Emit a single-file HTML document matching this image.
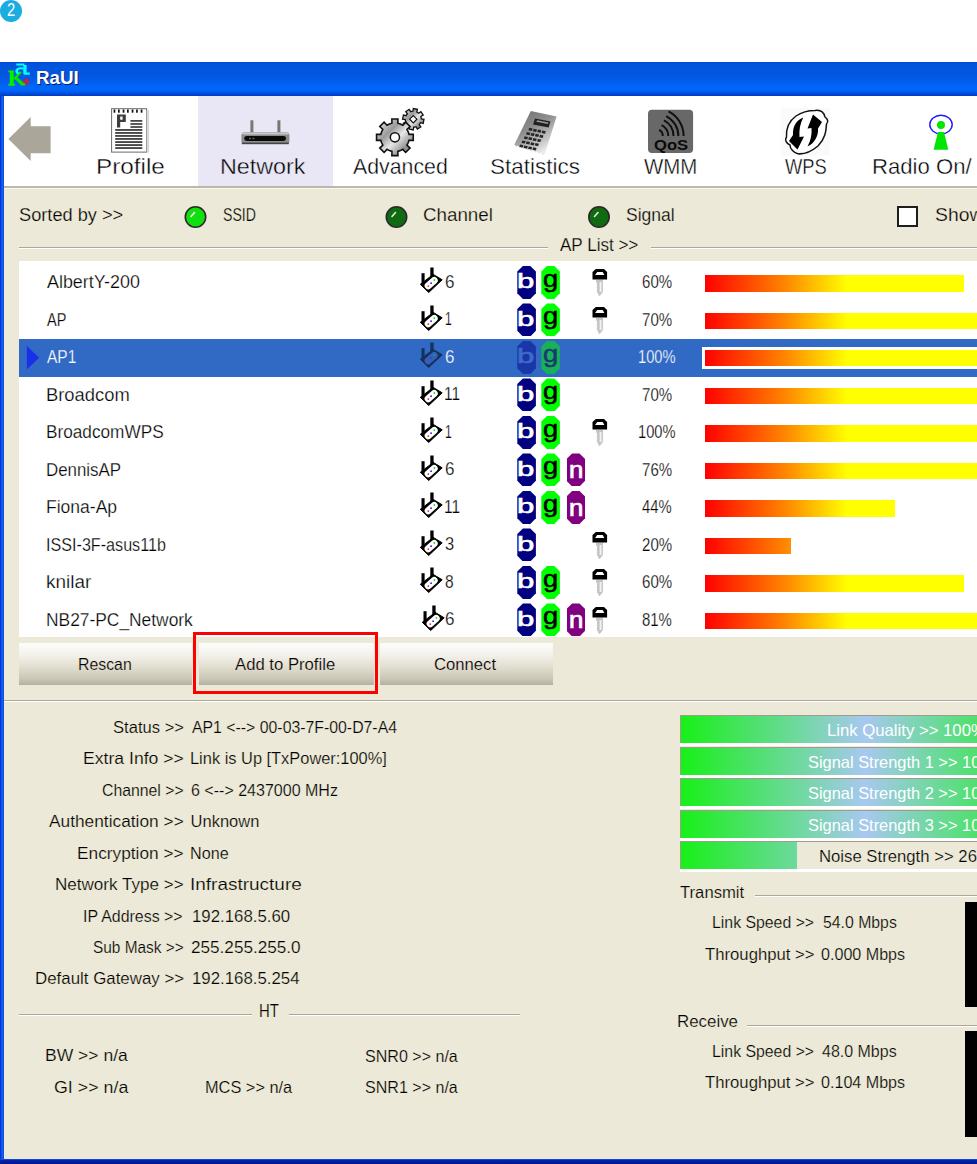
<!DOCTYPE html>
<html><head><meta charset="utf-8"><title>RaUI</title>
<style>
html,body{margin:0;padding:0}
body{width:977px;height:1164px;overflow:hidden;position:relative;background:#fff;font-family:"Liberation Sans",sans-serif}
.a{position:absolute}
.t{position:absolute;white-space:pre;line-height:1;transform-origin:0 0}
svg{position:absolute;overflow:visible}
</style></head><body>
<div class="a" style="left:0px;top:0px;width:22px;height:22px;border-radius:50%;background:#1badE2"></div>
<div class="t" style="left:6.71px;top:1.59px;font-size:17.5px;color:#fff;transform:scaleX(0.8411);">2</div>
<div class="a" style="left:0px;top:62px;width:977px;height:34px;background:linear-gradient(to bottom,#0046dc 0%,#0254dc 6%,#0356e0 38%,#045ce8 55%,#0066fa 72%,#0067fc 82%,#005cf0 88%,#0048d4 94%,#003cc4 100%)"></div>
<div class="a" style="left:0px;top:96px;width:4px;height:1063px;background:linear-gradient(to right,#0428d8 0,#0a3fe0 25%,#1466e8 50%,#0f5ae6 75%,#0050e0 100%)"></div>
<div class="a" style="left:0px;top:1159px;width:977px;height:5px;background:linear-gradient(to bottom,#1a5ae8 0,#0020b0 30%,#00168c 100%)"></div>
<svg style="left:0;top:0" width="40" height="100">
<rect x="9.8" y="70.6" width="3.9" height="15" fill="#00f000"/>
<rect x="8.3" y="70.6" width="5.4" height="1.8" fill="#00f000"/>
<rect x="8.3" y="83.6" width="6.8" height="2" fill="#00f000"/>
<path d="M13,78.6 L19.8,71.2 L22,72.6 L15.2,80 Z" fill="#00e800"/>
<path d="M13.5,77.8 L16.3,76.2 L25.6,84.2 L25,85.6 L21.2,85.6 Z" fill="#00e800"/>
<path d="M16.3,63.6 L24.4,63.6 L24.4,65.6 L16.3,65.6 Z M23.3,65 L26.6,65 L26.6,72.6 L29.8,72.6 L29.8,74.7 L24.6,74.7 Q23.3,74.7 23.3,73.4 Z" fill="#00ffff"/>
<path d="M23.6,67.6 Q18,66.2 15.6,69.6 Q14.6,72.8 17.6,74.4 L19.6,73 Q17.4,72 18,70.4 Q19.4,68.8 23.4,69.6 Z" fill="#00ffff"/>
<path d="M25.2,78.1 h1.7 v2.8 h2.8 v1.7 h-2.8 v3 h-1.7 v-3 h-2.8 v-1.7 h2.8 Z" fill="#ff1010"/>
</svg>
<div class="t" style="left:36.33px;top:68.12px;font-size:19px;color:#fff;font-weight:bold;transform:scaleX(0.9883);text-shadow:1px 1px 0 #0a1a6a;">RaUI</div>
<div class="a" style="left:4px;top:96px;width:973px;height:90px;background:#fff"></div>
<div class="a" style="left:198px;top:96px;width:135px;height:90px;background:#e9e7f5"></div>
<div class="a" style="left:4px;top:186px;width:973px;height:973px;background:#ece9d8"></div>
<div class="a" style="left:4px;top:186px;width:973px;height:2px;background:#bcb9ab"></div>
<div class="a" style="left:4px;top:188px;width:973px;height:1px;background:#f7f6ef"></div>
<svg style="left:0;top:0" width="60" height="170"><polygon points="8.4,139 30.7,117 30.7,126.2 50.6,126.2 50.6,153.2 30.7,153.2 30.7,161" fill="#aaa699"/></svg>
<svg style="left:0;top:0" width="160" height="170"><rect x="111.6" y="108.7" width="35" height="43.4" fill="#fff" stroke="#6a6a6a" stroke-width="1"/><rect x="146.6" y="110" width="2.5" height="42.5" fill="#d8d8d8"/><rect x="113.6" y="109.5" width="1.7" height="3.2" fill="#111"/><rect x="118.0" y="109.5" width="1.7" height="3.2" fill="#111"/><rect x="122.7" y="109.5" width="1.7" height="3.2" fill="#111"/><rect x="127.0" y="109.5" width="1.7" height="3.2" fill="#111"/><rect x="131.7" y="109.5" width="1.7" height="3.2" fill="#111"/><rect x="136.1" y="109.5" width="1.7" height="3.2" fill="#111"/><rect x="140.7" y="109.5" width="1.7" height="3.2" fill="#111"/><path d="M117,114.4 h8.8 v7.6 h-5.6 v5.6 h-3.2 Z M120.2,116.6 v3.1 h2.4 v-3.1 Z" fill="#3e3e3e" fill-rule="evenodd"/><rect x="130.4" y="120.1" width="11.9" height="1.6" fill="#333"/><rect x="130.4" y="123.2" width="11.9" height="1.6" fill="#333"/><rect x="130.4" y="126.2" width="11.9" height="1.6" fill="#333"/><rect x="115.2" y="129.1" width="27.1" height="1.7" fill="#333"/><rect x="115.2" y="132.1" width="27.1" height="1.7" fill="#333"/><rect x="115.2" y="135.1" width="27.1" height="1.7" fill="#333"/><rect x="115.2" y="138.1" width="27.1" height="1.7" fill="#333"/><rect x="115.2" y="141.2" width="27.1" height="1.7" fill="#333"/><rect x="115.2" y="144.2" width="27.1" height="1.7" fill="#333"/><rect x="115.2" y="147.2" width="27.1" height="1.7" fill="#333"/></svg>
<svg style="left:0;top:0" width="300" height="170">
<rect x="250.4" y="120.3" width="3" height="13" fill="#777"/>
<rect x="277.4" y="120.3" width="3" height="13" fill="#777"/>
<rect x="241.4" y="132.3" width="48" height="11.7" rx="3" fill="#8c8c8c"/>
<rect x="242" y="132.6" width="46.8" height="2" rx="1" fill="#c8c8c8"/>
<rect x="244.2" y="136" width="41.8" height="4.9" rx="2.4" fill="#0a0a0a"/>
<rect x="249" y="137.8" width="2" height="1.4" fill="#666"/><rect x="252.5" y="137.8" width="2" height="1.4" fill="#666"/>
<rect x="241.8" y="142.6" width="47" height="1.6" fill="#444"/>
</svg>
<svg style="left:0;top:0" width="440" height="170">
<defs><linearGradient id="gm" x1="0" y1="0" x2="1" y2="1">
<stop offset="0" stop-color="#f4f4f4"/><stop offset="0.35" stop-color="#9a9a9a"/><stop offset="0.55" stop-color="#e8e8e8"/><stop offset="0.8" stop-color="#8a8a8a"/><stop offset="1" stop-color="#d0d0d0"/></linearGradient></defs>
<path d="M421.15,117.67 L421.29,118.84 L424.00,119.24 L423.17,123.33 L420.52,122.65 L419.94,123.67 L419.21,124.59 L420.84,126.79 L417.36,129.10 L415.97,126.74 L414.83,127.05 L413.66,127.19 L413.26,129.90 L409.17,129.07 L409.85,126.42 L408.83,125.84 L407.91,125.11 L405.71,126.74 L403.40,123.26 L405.76,121.87 L405.45,120.73 L405.31,119.56 L402.60,119.16 L403.43,115.07 L406.08,115.75 L406.66,114.73 L407.39,113.81 L405.76,111.61 L409.24,109.30 L410.63,111.66 L411.77,111.35 L412.94,111.21 L413.34,108.50 L417.43,109.33 L416.75,111.98 L417.77,112.56 L418.69,113.29 L420.89,111.66 L423.20,115.14 L420.84,116.53Z" fill="url(#gm)" stroke="#111" stroke-width="1.3"/>
<path d="M413.3,115.6 L416.9,119.2 L413.3,122.8 L409.7,119.2 Z" fill="#fff" stroke="#111" stroke-width="1.2"/>
<path d="M408.20,131.79 L409.00,134.35 L413.25,134.25 L413.25,140.35 L409.00,140.25 L408.20,142.81 L406.95,145.18 L410.03,148.11 L405.71,152.43 L402.78,149.35 L400.41,150.60 L397.85,151.40 L397.95,155.65 L391.85,155.65 L391.95,151.40 L389.39,150.60 L387.02,149.35 L384.09,152.43 L379.77,148.11 L382.85,145.18 L381.60,142.81 L380.80,140.25 L376.55,140.35 L376.55,134.25 L380.80,134.35 L381.60,131.79 L382.85,129.42 L379.77,126.49 L384.09,122.17 L387.02,125.25 L389.39,124.00 L391.95,123.20 L391.85,118.95 L397.95,118.95 L397.85,123.20 L400.41,124.00 L402.78,125.25 L405.71,122.17 L410.03,126.49 L406.95,129.42Z" fill="url(#gm)" stroke="#111" stroke-width="1.6"/>
<circle cx="394.9" cy="137.3" r="4.6" fill="#fff" stroke="#111" stroke-width="1.5"/>
</svg>
<svg style="left:0;top:0" width="580" height="170"><defs><linearGradient id="cg" x1="0" y1="0" x2="0.6" y2="1"><stop offset="0" stop-color="#6e6e6e"/><stop offset="0.45" stop-color="#8c8c8c"/><stop offset="0.8" stop-color="#c4c4c4"/><stop offset="1" stop-color="#ececec"/></linearGradient></defs><polygon points="530.8,111.1 556.6,116.4 544.9,154.1 514.2,144.9" fill="url(#cg)"/><polygon points="535,118.6 550.5,121.6 548.6,127.6 533,124.6" fill="#222"/><polygon points="537,120.2 548.5,122.4 548,124 536.4,121.8" fill="#9a9a9a"/><polygon points="529.20,127.80 532.60,128.50 531.80,131.00 528.40,130.30" fill="#262626"/><polygon points="533.60,128.70 537.00,129.40 536.20,131.90 532.80,131.20" fill="#262626"/><polygon points="538.00,129.60 541.40,130.30 540.60,132.80 537.20,132.10" fill="#262626"/><polygon points="542.40,130.50 545.80,131.20 545.00,133.70 541.60,133.00" fill="#262626"/><polygon points="526.90,132.00 530.30,132.70 529.50,135.20 526.10,134.50" fill="#262626"/><polygon points="531.30,132.90 534.70,133.60 533.90,136.10 530.50,135.40" fill="#262626"/><polygon points="535.70,133.80 539.10,134.50 538.30,137.00 534.90,136.30" fill="#262626"/><polygon points="540.10,134.70 543.50,135.40 542.70,137.90 539.30,137.20" fill="#262626"/><polygon points="524.60,136.20 528.00,136.90 527.20,139.40 523.80,138.70" fill="#262626"/><polygon points="529.00,137.10 532.40,137.80 531.60,140.30 528.20,139.60" fill="#262626"/><polygon points="533.40,138.00 536.80,138.70 536.00,141.20 532.60,140.50" fill="#262626"/><polygon points="537.80,138.90 541.20,139.60 540.40,142.10 537.00,141.40" fill="#262626"/><polygon points="522.30,140.40 525.70,141.10 524.90,143.60 521.50,142.90" fill="#262626"/><polygon points="526.70,141.30 530.10,142.00 529.30,144.50 525.90,143.80" fill="#262626"/><polygon points="531.10,142.20 534.50,142.90 533.70,145.40 530.30,144.70" fill="#262626"/><polygon points="535.50,143.10 538.90,143.80 538.10,146.30 534.70,145.60" fill="#262626"/><polygon points="520.00,144.60 523.40,145.30 522.60,147.80 519.20,147.10" fill="#262626"/><polygon points="524.40,145.50 527.80,146.20 527.00,148.70 523.60,148.00" fill="#262626"/><polygon points="528.80,146.40 532.20,147.10 531.40,149.60 528.00,148.90" fill="#262626"/><polygon points="533.20,147.30 536.60,148.00 535.80,150.50 532.40,149.80" fill="#262626"/><path d="M515,146 L545,154.5" stroke="#d8d8d8" stroke-width="1" stroke-dasharray="2,2"/></svg>
<svg style="left:0;top:0" width="720" height="170"><defs><clipPath id="qc"><rect x="648" y="109.8" width="45.1" height="43.3" rx="4"/></clipPath></defs><rect x="648" y="109.8" width="45.1" height="43.3" rx="4" fill="#686868"/><g clip-path="url(#qc)"><path d="M659.09,129.94 A6.8,6.8 0 0 1 662.80,136.00" fill="none" stroke="#111" stroke-width="2"/><path d="M661.58,125.04 A12.3,12.3 0 0 1 668.30,136.00" fill="none" stroke="#111" stroke-width="2"/><path d="M663.94,120.41 A17.5,17.5 0 0 1 673.50,136.00" fill="none" stroke="#111" stroke-width="2"/><path d="M666.17,116.04 A22.4,22.4 0 0 1 678.40,136.00" fill="none" stroke="#111" stroke-width="2"/><path d="M668.53,111.41 A27.6,27.6 0 0 1 683.60,136.00" fill="none" stroke="#111" stroke-width="2"/></g></svg>
<div class="t" style="left:653.58px;top:137.53px;font-size:14.5px;color:#0a0a0a;font-weight:bold;transform:scaleX(1.1459);">QoS</div>
<svg style="left:0;top:0" width="840" height="170">
<rect x="781" y="108" width="48.7" height="47.6" fill="#fafafa"/>
<path d="M815,110.5 C822,109.5 824,113 825,117 C828,119 828.5,122 826.5,124 C826,130 826,138 818,146 C812,151 806,154.5 798,153.8 C794,153 790,149 790,145 C786,143 784.5,140 786.5,137 C786,128 789,121 796,116 C802,112 809,110.5 815,110.5 Z" fill="#fff" stroke="#111" stroke-width="1.5"/>
<path d="M803.3,117.5 C796,120 792.5,127 793,135 L789,141 L797.5,149.5 L804,136.5 L799.5,137 C799,130 800,124 803.3,117.5 Z" fill="#000"/>
<path d="M807.5,146.5 C815,143 818.5,135.5 818,128.5 L822,122 L813,114.5 L807.5,128.5 L811.5,128 C812,134 811,140 807.5,146.5 Z" fill="#000"/>
</svg>
<svg style="left:0;top:0" width="977" height="170">
<ellipse cx="941" cy="124.6" rx="11.2" ry="9.3" fill="none" stroke="#1a1aff" stroke-width="1.4"/>
<circle cx="941" cy="125" r="4" fill="#00e600"/>
<polygon points="938,132 944,132 948.3,149.8 933.6,149.8" fill="#00e600"/>
</svg>
<div class="t" style="left:96.10px;top:155.68px;font-size:22px;color:#000;transform:scaleX(1.1046);-webkit-text-stroke:0.38px #fff;">Profile</div>
<div class="t" style="left:220.18px;top:155.68px;font-size:22px;color:#000;transform:scaleX(1.0591);-webkit-text-stroke:0.38px #e9e7f5;">Network</div>
<div class="t" style="left:352.80px;top:155.68px;font-size:22px;color:#000;transform:scaleX(0.9688);-webkit-text-stroke:0.38px #fff;">Advanced</div>
<div class="t" style="left:490.30px;top:155.68px;font-size:22px;color:#000;transform:scaleX(1.0214);-webkit-text-stroke:0.38px #fff;">Statistics</div>
<div class="t" style="left:644.00px;top:155.68px;font-size:22px;color:#000;transform:scaleX(0.9297);-webkit-text-stroke:0.38px #fff;">WMM</div>
<div class="t" style="left:785.00px;top:155.68px;font-size:22px;color:#000;transform:scaleX(0.8335);-webkit-text-stroke:0.38px #fff;">WPS</div>
<div class="t" style="left:872.27px;top:155.68px;font-size:22px;color:#000;transform:scaleX(1.0061);-webkit-text-stroke:0.38px #fff;">Radio On/</div>
<div class="t" style="left:19.43px;top:205.76px;font-size:18px;color:#000;transform:scaleX(1.0114);-webkit-text-stroke:0.25px #ece9d8;">Sorted by &gt;&gt;</div>
<svg style="left:0;top:0" width="977" height="240"><circle cx="195.5" cy="217" r="10.2" fill="#10e010" stroke="#2a2a2a" stroke-width="1.6"/><path d="M191.0,216.5 L194.5,212.5" stroke="#f0fff0" stroke-width="1.6" stroke-linecap="round"/></svg>
<div class="t" style="left:222.56px;top:205.76px;font-size:18px;color:#000;transform:scaleX(0.7838);-webkit-text-stroke:0.25px #ece9d8;">SSID</div>
<svg style="left:0;top:0" width="977" height="240"><circle cx="396.5" cy="217" r="10.2" fill="#0f6a12" stroke="#2a2a2a" stroke-width="1.6"/><path d="M392.0,216.5 L395.5,212.5" stroke="#d8f0d8" stroke-width="1.6" stroke-linecap="round"/></svg>
<div class="t" style="left:422.82px;top:205.76px;font-size:18px;color:#000;transform:scaleX(1.0427);-webkit-text-stroke:0.25px #ece9d8;">Channel</div>
<svg style="left:0;top:0" width="977" height="240"><circle cx="599" cy="217" r="10.2" fill="#0f6a12" stroke="#2a2a2a" stroke-width="1.6"/><path d="M594.5,216.5 L598,212.5" stroke="#d8f0d8" stroke-width="1.6" stroke-linecap="round"/></svg>
<div class="t" style="left:626.45px;top:205.76px;font-size:18px;color:#000;transform:scaleX(0.9733);-webkit-text-stroke:0.25px #ece9d8;">Signal</div>
<div class="a" style="left:896.8px;top:205.6px;width:17px;height:17px;border:2px solid #1e1e1e;background:#fff"></div>
<div class="t" style="left:935.40px;top:205.76px;font-size:18px;color:#000;transform:scaleX(1.0742);-webkit-text-stroke:0.25px #ece9d8;">Show</div>
<div class="a" style="left:19px;top:247px;width:529px;height:1px;background:#aca899"></div>
<div class="a" style="left:19px;top:248px;width:529px;height:1px;background:#fff"></div>
<div class="a" style="left:651px;top:247px;width:326px;height:1px;background:#aca899"></div>
<div class="a" style="left:651px;top:248px;width:326px;height:1px;background:#fff"></div>
<div class="t" style="left:560.00px;top:235.76px;font-size:18px;color:#000;transform:scaleX(0.9468);-webkit-text-stroke:0.25px #ece9d8;">AP List &gt;&gt;</div>
<div class="a" style="left:19px;top:261px;width:958px;height:376px;background:#fff"></div>
<div class="t" style="left:47.40px;top:273.36px;font-size:18px;color:#000;transform:scaleX(0.9940);-webkit-text-stroke:0.25px #fff;">AlbertY-200</div>
<svg style="left:420px;top:264.3px" width="24" height="30" viewBox="0 0 24 30"><rect x="1.5" y="9.2" width="3.1" height="11.5" fill="#000"/><rect x="10.3" y="3.5" width="3.3" height="8.8" fill="#000"/><polygon points="0.3,20.3 13.2,10.4 22.2,15.8 8.7,28.5" fill="#000" stroke="#000" stroke-width="1" stroke-linejoin="round"/><rect x="3.7" y="15.6" width="15" height="7" rx="3.3" fill="#fff" transform="rotate(-42 11.2 19.1)"/><circle cx="8.3" cy="22.1" r="0.9" fill="#ff2020" opacity="1"/><circle cx="11.1" cy="19.2" r="0.9" fill="#2020ff" opacity="1"/><circle cx="14.4" cy="16" r="0.9" fill="#20e020" opacity="1"/></svg>
<div class="t" style="left:444.50px;top:272.86px;font-size:18px;color:#000;transform:scaleX(0.9481);-webkit-text-stroke:0.25px #fff;">6</div>
<div class="a" style="left:517.3px;top:265.90000000000003px;width:18.6px;height:33px;background:#000080;clip-path:polygon(5.6px 0,13px 0,18.6px 5.6px,18.6px 27.4px,13px 33px,5.6px 33px,0 27.4px,0 5.6px)"></div>
<div class="t" style="left:517.41px;top:271.22px;font-size:23px;color:#fff;transform:scale(1.3529,0.9043);-webkit-text-stroke:0.7px #fff;">b</div>
<div class="a" style="left:541.3px;top:265.90000000000003px;width:18.6px;height:33px;background:#00ff00;clip-path:polygon(5.6px 0,13px 0,18.6px 5.6px,18.6px 27.4px,13px 33px,5.6px 33px,0 27.4px,0 5.6px)"></div>
<div class="t" style="left:542.70px;top:266.95px;font-size:23px;color:#000;transform:scale(1.1872,1.0449);-webkit-text-stroke:0.5px #000;">g</div>
<svg style="left:592.2px;top:269.0px" width="18" height="30" viewBox="0 0 18 30"><path d="M4.1,10.8 L10.9,10.8 L10.9,23 L7.8,26.9 L6.2,26 L6.2,24.2 L4.8,23.6 L5.4,22 L4.6,21.2 L5.4,19.4 L4.6,18.6 L5.4,17 L4.6,16 L5.4,14.6 L4.1,13.6 Z" fill="#c4c4c4"/><rect x="7.6" y="13" width="1.9" height="10" fill="#f2f2f2"/><polygon points="3.8,0.1 12,0.1 15.1,3 15.1,10.6 0.5,10.6 0.5,3" fill="#000"/><polygon points="5.2,3 10.7,3 12.4,6 3.1,6" fill="#fff"/></svg>
<div class="t" style="left:641.59px;top:273.16px;font-size:18px;color:#000;transform:scaleX(0.8370);-webkit-text-stroke:0.25px #fff;">60%</div>
<div class="a" style="left:705.1px;top:275.1px;width:258.59999999999997px;height:16.6px;background:linear-gradient(to right,#ff0000 0,#ff8000 77px,#ffff00 142px,#ffff00 100%)"></div>
<div class="t" style="left:47.40px;top:310.86px;font-size:18px;color:#000;transform:scaleX(0.8041);-webkit-text-stroke:0.25px #fff;">AP</div>
<svg style="left:420px;top:301.8px" width="24" height="30" viewBox="0 0 24 30"><rect x="1.5" y="9.2" width="3.1" height="11.5" fill="#000"/><rect x="10.3" y="3.5" width="3.3" height="8.8" fill="#000"/><polygon points="0.3,20.3 13.2,10.4 22.2,15.8 8.7,28.5" fill="#000" stroke="#000" stroke-width="1" stroke-linejoin="round"/><rect x="3.7" y="15.6" width="15" height="7" rx="3.3" fill="#fff" transform="rotate(-42 11.2 19.1)"/><circle cx="8.3" cy="22.1" r="0.9" fill="#ff2020" opacity="1"/><circle cx="11.1" cy="19.2" r="0.9" fill="#2020ff" opacity="1"/><circle cx="14.4" cy="16" r="0.9" fill="#20e020" opacity="1"/></svg>
<div class="t" style="left:444.54px;top:310.36px;font-size:18px;color:#000;transform:scaleX(0.6743);-webkit-text-stroke:0.25px #fff;">1</div>
<div class="a" style="left:517.3px;top:303.40000000000003px;width:18.6px;height:33px;background:#000080;clip-path:polygon(5.6px 0,13px 0,18.6px 5.6px,18.6px 27.4px,13px 33px,5.6px 33px,0 27.4px,0 5.6px)"></div>
<div class="t" style="left:517.41px;top:308.72px;font-size:23px;color:#fff;transform:scale(1.3529,0.9043);-webkit-text-stroke:0.7px #fff;">b</div>
<div class="a" style="left:541.3px;top:303.40000000000003px;width:18.6px;height:33px;background:#00ff00;clip-path:polygon(5.6px 0,13px 0,18.6px 5.6px,18.6px 27.4px,13px 33px,5.6px 33px,0 27.4px,0 5.6px)"></div>
<div class="t" style="left:542.70px;top:304.45px;font-size:23px;color:#000;transform:scale(1.1872,1.0449);-webkit-text-stroke:0.5px #000;">g</div>
<svg style="left:592.2px;top:306.5px" width="18" height="30" viewBox="0 0 18 30"><path d="M4.1,10.8 L10.9,10.8 L10.9,23 L7.8,26.9 L6.2,26 L6.2,24.2 L4.8,23.6 L5.4,22 L4.6,21.2 L5.4,19.4 L4.6,18.6 L5.4,17 L4.6,16 L5.4,14.6 L4.1,13.6 Z" fill="#c4c4c4"/><rect x="7.6" y="13" width="1.9" height="10" fill="#f2f2f2"/><polygon points="3.8,0.1 12,0.1 15.1,3 15.1,10.6 0.5,10.6 0.5,3" fill="#000"/><polygon points="5.2,3 10.7,3 12.4,6 3.1,6" fill="#fff"/></svg>
<div class="t" style="left:641.59px;top:310.66px;font-size:18px;color:#000;transform:scaleX(0.8370);-webkit-text-stroke:0.25px #fff;">70%</div>
<div class="a" style="left:705.1px;top:312.6px;width:301.7px;height:16.6px;background:linear-gradient(to right,#ff0000 0,#ff8000 77px,#ffff00 142px,#ffff00 100%)"></div>
<div class="a" style="left:19px;top:339.3px;width:958px;height:37.5px;background:#316ac5"></div>
<svg style="left:0;top:0" width="60" height="400"><polygon points="26.8,346.0 39.2,357.8 26.8,369.6" fill="#1a30e8"/></svg>
<div class="t" style="left:47.40px;top:348.36px;font-size:18px;color:#fff;transform:scaleX(0.8590);-webkit-text-stroke:0.25px #316ac5;">AP1</div>
<svg style="left:420px;top:339.3px" width="24" height="30" viewBox="0 0 24 30"><rect x="1.5" y="9.2" width="3.1" height="11.5" fill="#17305f"/><rect x="10.3" y="3.5" width="3.3" height="8.8" fill="#17305f"/><polygon points="0.3,20.3 13.2,10.4 22.2,15.8 8.7,28.5" fill="#17305f" stroke="#17305f" stroke-width="1" stroke-linejoin="round"/><rect x="3.7" y="15.6" width="15" height="7" rx="3.3" fill="#2f62b8" transform="rotate(-42 11.2 19.1)"/><circle cx="8.3" cy="22.1" r="0.9" fill="#ff2020" opacity="0.55"/><circle cx="11.1" cy="19.2" r="0.9" fill="#2020ff" opacity="0.55"/><circle cx="14.4" cy="16" r="0.9" fill="#20e020" opacity="0.55"/></svg>
<div class="t" style="left:444.50px;top:347.86px;font-size:18px;color:#fff;transform:scaleX(0.9481);-webkit-text-stroke:0.25px #316ac5;">6</div>
<div class="a" style="left:517.3px;top:340.90000000000003px;width:18.6px;height:33px;background:#1a36a8;clip-path:polygon(5.6px 0,13px 0,18.6px 5.6px,18.6px 27.4px,13px 33px,5.6px 33px,0 27.4px,0 5.6px)"></div>
<div class="t" style="left:517.41px;top:346.22px;font-size:23px;color:#3c6cc8;transform:scale(1.3529,0.9043);-webkit-text-stroke:0.7px #3c6cc8;">b</div>
<div class="a" style="left:541.3px;top:340.90000000000003px;width:18.6px;height:33px;background:#18b058;clip-path:polygon(5.6px 0,13px 0,18.6px 5.6px,18.6px 27.4px,13px 33px,5.6px 33px,0 27.4px,0 5.6px)"></div>
<div class="t" style="left:542.70px;top:341.95px;font-size:23px;color:#183a70;transform:scale(1.1872,1.0449);-webkit-text-stroke:0.5px #183a70;">g</div>
<div class="t" style="left:637.78px;top:348.16px;font-size:18px;color:#fff;transform:scaleX(0.8158);-webkit-text-stroke:0.25px #316ac5;">100%</div>
<div class="a" style="left:702px;top:346.8px;width:300px;height:22px;background:#fff"></div>
<div class="a" style="left:705.3px;top:350.1px;width:300px;height:15.7px;background:linear-gradient(to right,#ff0000 0,#ff8000 77px,#ffff00 142px,#ffff00 100%)"></div>
<div class="t" style="left:45.97px;top:385.86px;font-size:18px;color:#000;transform:scaleX(1.0201);-webkit-text-stroke:0.25px #fff;">Broadcom</div>
<svg style="left:420px;top:376.8px" width="24" height="30" viewBox="0 0 24 30"><rect x="1.5" y="9.2" width="3.1" height="11.5" fill="#000"/><rect x="10.3" y="3.5" width="3.3" height="8.8" fill="#000"/><polygon points="0.3,20.3 13.2,10.4 22.2,15.8 8.7,28.5" fill="#000" stroke="#000" stroke-width="1" stroke-linejoin="round"/><rect x="3.7" y="15.6" width="15" height="7" rx="3.3" fill="#fff" transform="rotate(-42 11.2 19.1)"/><circle cx="8.3" cy="22.1" r="0.9" fill="#ff2020" opacity="1"/><circle cx="11.1" cy="19.2" r="0.9" fill="#2020ff" opacity="1"/><circle cx="14.4" cy="16" r="0.9" fill="#20e020" opacity="1"/></svg>
<div class="t" style="left:444.33px;top:385.36px;font-size:18px;color:#000;transform:scaleX(0.8615);-webkit-text-stroke:0.25px #fff;">11</div>
<div class="a" style="left:517.3px;top:378.40000000000003px;width:18.6px;height:33px;background:#000080;clip-path:polygon(5.6px 0,13px 0,18.6px 5.6px,18.6px 27.4px,13px 33px,5.6px 33px,0 27.4px,0 5.6px)"></div>
<div class="t" style="left:517.41px;top:383.72px;font-size:23px;color:#fff;transform:scale(1.3529,0.9043);-webkit-text-stroke:0.7px #fff;">b</div>
<div class="a" style="left:541.3px;top:378.40000000000003px;width:18.6px;height:33px;background:#00ff00;clip-path:polygon(5.6px 0,13px 0,18.6px 5.6px,18.6px 27.4px,13px 33px,5.6px 33px,0 27.4px,0 5.6px)"></div>
<div class="t" style="left:542.70px;top:379.45px;font-size:23px;color:#000;transform:scale(1.1872,1.0449);-webkit-text-stroke:0.5px #000;">g</div>
<div class="t" style="left:641.59px;top:385.66px;font-size:18px;color:#000;transform:scaleX(0.8370);-webkit-text-stroke:0.25px #fff;">70%</div>
<div class="a" style="left:705.1px;top:387.6px;width:301.7px;height:16.6px;background:linear-gradient(to right,#ff0000 0,#ff8000 77px,#ffff00 142px,#ffff00 100%)"></div>
<div class="t" style="left:46.06px;top:423.36px;font-size:18px;color:#000;transform:scaleX(0.9564);-webkit-text-stroke:0.25px #fff;">BroadcomWPS</div>
<svg style="left:420px;top:414.3px" width="24" height="30" viewBox="0 0 24 30"><rect x="1.5" y="9.2" width="3.1" height="11.5" fill="#000"/><rect x="10.3" y="3.5" width="3.3" height="8.8" fill="#000"/><polygon points="0.3,20.3 13.2,10.4 22.2,15.8 8.7,28.5" fill="#000" stroke="#000" stroke-width="1" stroke-linejoin="round"/><rect x="3.7" y="15.6" width="15" height="7" rx="3.3" fill="#fff" transform="rotate(-42 11.2 19.1)"/><circle cx="8.3" cy="22.1" r="0.9" fill="#ff2020" opacity="1"/><circle cx="11.1" cy="19.2" r="0.9" fill="#2020ff" opacity="1"/><circle cx="14.4" cy="16" r="0.9" fill="#20e020" opacity="1"/></svg>
<div class="t" style="left:444.54px;top:422.86px;font-size:18px;color:#000;transform:scaleX(0.6743);-webkit-text-stroke:0.25px #fff;">1</div>
<div class="a" style="left:517.3px;top:415.90000000000003px;width:18.6px;height:33px;background:#000080;clip-path:polygon(5.6px 0,13px 0,18.6px 5.6px,18.6px 27.4px,13px 33px,5.6px 33px,0 27.4px,0 5.6px)"></div>
<div class="t" style="left:517.41px;top:421.22px;font-size:23px;color:#fff;transform:scale(1.3529,0.9043);-webkit-text-stroke:0.7px #fff;">b</div>
<div class="a" style="left:541.3px;top:415.90000000000003px;width:18.6px;height:33px;background:#00ff00;clip-path:polygon(5.6px 0,13px 0,18.6px 5.6px,18.6px 27.4px,13px 33px,5.6px 33px,0 27.4px,0 5.6px)"></div>
<div class="t" style="left:542.70px;top:416.95px;font-size:23px;color:#000;transform:scale(1.1872,1.0449);-webkit-text-stroke:0.5px #000;">g</div>
<svg style="left:592.2px;top:419.0px" width="18" height="30" viewBox="0 0 18 30"><path d="M4.1,10.8 L10.9,10.8 L10.9,23 L7.8,26.9 L6.2,26 L6.2,24.2 L4.8,23.6 L5.4,22 L4.6,21.2 L5.4,19.4 L4.6,18.6 L5.4,17 L4.6,16 L5.4,14.6 L4.1,13.6 Z" fill="#c4c4c4"/><rect x="7.6" y="13" width="1.9" height="10" fill="#f2f2f2"/><polygon points="3.8,0.1 12,0.1 15.1,3 15.1,10.6 0.5,10.6 0.5,3" fill="#000"/><polygon points="5.2,3 10.7,3 12.4,6 3.1,6" fill="#fff"/></svg>
<div class="t" style="left:637.78px;top:423.16px;font-size:18px;color:#000;transform:scaleX(0.8158);-webkit-text-stroke:0.25px #fff;">100%</div>
<div class="a" style="left:705.1px;top:425.1px;width:430.99999999999994px;height:16.6px;background:linear-gradient(to right,#ff0000 0,#ff8000 77px,#ffff00 142px,#ffff00 100%)"></div>
<div class="t" style="left:46.08px;top:460.86px;font-size:18px;color:#000;transform:scaleX(0.9373);-webkit-text-stroke:0.25px #fff;">DennisAP</div>
<svg style="left:420px;top:451.8px" width="24" height="30" viewBox="0 0 24 30"><rect x="1.5" y="9.2" width="3.1" height="11.5" fill="#000"/><rect x="10.3" y="3.5" width="3.3" height="8.8" fill="#000"/><polygon points="0.3,20.3 13.2,10.4 22.2,15.8 8.7,28.5" fill="#000" stroke="#000" stroke-width="1" stroke-linejoin="round"/><rect x="3.7" y="15.6" width="15" height="7" rx="3.3" fill="#fff" transform="rotate(-42 11.2 19.1)"/><circle cx="8.3" cy="22.1" r="0.9" fill="#ff2020" opacity="1"/><circle cx="11.1" cy="19.2" r="0.9" fill="#2020ff" opacity="1"/><circle cx="14.4" cy="16" r="0.9" fill="#20e020" opacity="1"/></svg>
<div class="t" style="left:444.50px;top:460.36px;font-size:18px;color:#000;transform:scaleX(0.9481);-webkit-text-stroke:0.25px #fff;">6</div>
<div class="a" style="left:517.3px;top:453.40000000000003px;width:18.6px;height:33px;background:#000080;clip-path:polygon(5.6px 0,13px 0,18.6px 5.6px,18.6px 27.4px,13px 33px,5.6px 33px,0 27.4px,0 5.6px)"></div>
<div class="t" style="left:517.41px;top:458.72px;font-size:23px;color:#fff;transform:scale(1.3529,0.9043);-webkit-text-stroke:0.7px #fff;">b</div>
<div class="a" style="left:541.3px;top:453.40000000000003px;width:18.6px;height:33px;background:#00ff00;clip-path:polygon(5.6px 0,13px 0,18.6px 5.6px,18.6px 27.4px,13px 33px,5.6px 33px,0 27.4px,0 5.6px)"></div>
<div class="t" style="left:542.70px;top:454.45px;font-size:23px;color:#000;transform:scale(1.1872,1.0449);-webkit-text-stroke:0.5px #000;">g</div>
<div class="a" style="left:566.5px;top:453.40000000000003px;width:18.6px;height:33px;background:#800080;clip-path:polygon(5.6px 0,13px 0,18.6px 5.6px,18.6px 27.4px,13px 33px,5.6px 33px,0 27.4px,0 5.6px)"></div>
<div class="t" style="left:568.64px;top:459.38px;font-size:23px;color:#fff;transform:scale(1.1230,1.0256);-webkit-text-stroke:0.7px #fff;">n</div>
<div class="t" style="left:641.59px;top:460.66px;font-size:18px;color:#000;transform:scaleX(0.8370);-webkit-text-stroke:0.25px #fff;">76%</div>
<div class="a" style="left:705.1px;top:462.6px;width:327.55999999999995px;height:16.6px;background:linear-gradient(to right,#ff0000 0,#ff8000 77px,#ffff00 142px,#ffff00 100%)"></div>
<div class="t" style="left:46.03px;top:498.36px;font-size:18px;color:#000;transform:scaleX(0.9732);-webkit-text-stroke:0.25px #fff;">Fiona-Ap</div>
<svg style="left:420px;top:489.3px" width="24" height="30" viewBox="0 0 24 30"><rect x="1.5" y="9.2" width="3.1" height="11.5" fill="#000"/><rect x="10.3" y="3.5" width="3.3" height="8.8" fill="#000"/><polygon points="0.3,20.3 13.2,10.4 22.2,15.8 8.7,28.5" fill="#000" stroke="#000" stroke-width="1" stroke-linejoin="round"/><rect x="3.7" y="15.6" width="15" height="7" rx="3.3" fill="#fff" transform="rotate(-42 11.2 19.1)"/><circle cx="8.3" cy="22.1" r="0.9" fill="#ff2020" opacity="1"/><circle cx="11.1" cy="19.2" r="0.9" fill="#2020ff" opacity="1"/><circle cx="14.4" cy="16" r="0.9" fill="#20e020" opacity="1"/></svg>
<div class="t" style="left:444.33px;top:497.86px;font-size:18px;color:#000;transform:scaleX(0.8615);-webkit-text-stroke:0.25px #fff;">11</div>
<div class="a" style="left:517.3px;top:490.90000000000003px;width:18.6px;height:33px;background:#000080;clip-path:polygon(5.6px 0,13px 0,18.6px 5.6px,18.6px 27.4px,13px 33px,5.6px 33px,0 27.4px,0 5.6px)"></div>
<div class="t" style="left:517.41px;top:496.22px;font-size:23px;color:#fff;transform:scale(1.3529,0.9043);-webkit-text-stroke:0.7px #fff;">b</div>
<div class="a" style="left:541.3px;top:490.90000000000003px;width:18.6px;height:33px;background:#00ff00;clip-path:polygon(5.6px 0,13px 0,18.6px 5.6px,18.6px 27.4px,13px 33px,5.6px 33px,0 27.4px,0 5.6px)"></div>
<div class="t" style="left:542.70px;top:491.95px;font-size:23px;color:#000;transform:scale(1.1872,1.0449);-webkit-text-stroke:0.5px #000;">g</div>
<div class="a" style="left:566.5px;top:490.90000000000003px;width:18.6px;height:33px;background:#800080;clip-path:polygon(5.6px 0,13px 0,18.6px 5.6px,18.6px 27.4px,13px 33px,5.6px 33px,0 27.4px,0 5.6px)"></div>
<div class="t" style="left:568.64px;top:496.88px;font-size:23px;color:#fff;transform:scale(1.1230,1.0256);-webkit-text-stroke:0.7px #fff;">n</div>
<div class="t" style="left:642.07px;top:498.16px;font-size:18px;color:#000;transform:scaleX(0.8237);-webkit-text-stroke:0.25px #fff;">44%</div>
<div class="a" style="left:705.1px;top:500.1px;width:189.64px;height:16.6px;background:linear-gradient(to right,#ff0000 0,#ff8000 77px,#ffff00 142px,#ffff00 100%)"></div>
<div class="t" style="left:46.14px;top:535.86px;font-size:18px;color:#000;transform:scaleX(0.8967);-webkit-text-stroke:0.25px #fff;">ISSI-3F-asus11b</div>
<svg style="left:420px;top:526.8px" width="24" height="30" viewBox="0 0 24 30"><rect x="1.5" y="9.2" width="3.1" height="11.5" fill="#000"/><rect x="10.3" y="3.5" width="3.3" height="8.8" fill="#000"/><polygon points="0.3,20.3 13.2,10.4 22.2,15.8 8.7,28.5" fill="#000" stroke="#000" stroke-width="1" stroke-linejoin="round"/><rect x="3.7" y="15.6" width="15" height="7" rx="3.3" fill="#fff" transform="rotate(-42 11.2 19.1)"/><circle cx="8.3" cy="22.1" r="0.9" fill="#ff2020" opacity="1"/><circle cx="11.1" cy="19.2" r="0.9" fill="#2020ff" opacity="1"/><circle cx="14.4" cy="16" r="0.9" fill="#20e020" opacity="1"/></svg>
<div class="t" style="left:444.78px;top:535.36px;font-size:18px;color:#000;transform:scaleX(0.9176);-webkit-text-stroke:0.25px #fff;">3</div>
<div class="a" style="left:517.3px;top:528.4px;width:18.6px;height:33px;background:#000080;clip-path:polygon(5.6px 0,13px 0,18.6px 5.6px,18.6px 27.4px,13px 33px,5.6px 33px,0 27.4px,0 5.6px)"></div>
<div class="t" style="left:517.41px;top:533.72px;font-size:23px;color:#fff;transform:scale(1.3529,0.9043);-webkit-text-stroke:0.7px #fff;">b</div>
<svg style="left:592.2px;top:531.5px" width="18" height="30" viewBox="0 0 18 30"><path d="M4.1,10.8 L10.9,10.8 L10.9,23 L7.8,26.9 L6.2,26 L6.2,24.2 L4.8,23.6 L5.4,22 L4.6,21.2 L5.4,19.4 L4.6,18.6 L5.4,17 L4.6,16 L5.4,14.6 L4.1,13.6 Z" fill="#c4c4c4"/><rect x="7.6" y="13" width="1.9" height="10" fill="#f2f2f2"/><polygon points="3.8,0.1 12,0.1 15.1,3 15.1,10.6 0.5,10.6 0.5,3" fill="#000"/><polygon points="5.2,3 10.7,3 12.4,6 3.1,6" fill="#fff"/></svg>
<div class="t" style="left:641.59px;top:535.66px;font-size:18px;color:#000;transform:scaleX(0.8370);-webkit-text-stroke:0.25px #fff;">20%</div>
<div class="a" style="left:705.1px;top:537.5999999999999px;width:86.19999999999999px;height:16.6px;background:linear-gradient(to right,#ff0000 0,#ff8000 77px,#ffff00 142px,#ffff00 100%)"></div>
<div class="t" style="left:46.22px;top:573.36px;font-size:18px;color:#000;transform:scaleX(1.0526);-webkit-text-stroke:0.25px #fff;">knilar</div>
<svg style="left:420px;top:564.3px" width="24" height="30" viewBox="0 0 24 30"><rect x="1.5" y="9.2" width="3.1" height="11.5" fill="#000"/><rect x="10.3" y="3.5" width="3.3" height="8.8" fill="#000"/><polygon points="0.3,20.3 13.2,10.4 22.2,15.8 8.7,28.5" fill="#000" stroke="#000" stroke-width="1" stroke-linejoin="round"/><rect x="3.7" y="15.6" width="15" height="7" rx="3.3" fill="#fff" transform="rotate(-42 11.2 19.1)"/><circle cx="8.3" cy="22.1" r="0.9" fill="#ff2020" opacity="1"/><circle cx="11.1" cy="19.2" r="0.9" fill="#2020ff" opacity="1"/><circle cx="14.4" cy="16" r="0.9" fill="#20e020" opacity="1"/></svg>
<div class="t" style="left:444.82px;top:572.86px;font-size:18px;color:#000;transform:scaleX(0.8602);-webkit-text-stroke:0.25px #fff;">8</div>
<div class="a" style="left:517.3px;top:565.9px;width:18.6px;height:33px;background:#000080;clip-path:polygon(5.6px 0,13px 0,18.6px 5.6px,18.6px 27.4px,13px 33px,5.6px 33px,0 27.4px,0 5.6px)"></div>
<div class="t" style="left:517.41px;top:571.22px;font-size:23px;color:#fff;transform:scale(1.3529,0.9043);-webkit-text-stroke:0.7px #fff;">b</div>
<div class="a" style="left:541.3px;top:565.9px;width:18.6px;height:33px;background:#00ff00;clip-path:polygon(5.6px 0,13px 0,18.6px 5.6px,18.6px 27.4px,13px 33px,5.6px 33px,0 27.4px,0 5.6px)"></div>
<div class="t" style="left:542.70px;top:566.95px;font-size:23px;color:#000;transform:scale(1.1872,1.0449);-webkit-text-stroke:0.5px #000;">g</div>
<svg style="left:592.2px;top:569.0px" width="18" height="30" viewBox="0 0 18 30"><path d="M4.1,10.8 L10.9,10.8 L10.9,23 L7.8,26.9 L6.2,26 L6.2,24.2 L4.8,23.6 L5.4,22 L4.6,21.2 L5.4,19.4 L4.6,18.6 L5.4,17 L4.6,16 L5.4,14.6 L4.1,13.6 Z" fill="#c4c4c4"/><rect x="7.6" y="13" width="1.9" height="10" fill="#f2f2f2"/><polygon points="3.8,0.1 12,0.1 15.1,3 15.1,10.6 0.5,10.6 0.5,3" fill="#000"/><polygon points="5.2,3 10.7,3 12.4,6 3.1,6" fill="#fff"/></svg>
<div class="t" style="left:641.59px;top:573.16px;font-size:18px;color:#000;transform:scaleX(0.8370);-webkit-text-stroke:0.25px #fff;">60%</div>
<div class="a" style="left:705.1px;top:575.0999999999999px;width:258.59999999999997px;height:16.6px;background:linear-gradient(to right,#ff0000 0,#ff8000 77px,#ffff00 142px,#ffff00 100%)"></div>
<div class="t" style="left:46.04px;top:610.86px;font-size:18px;color:#000;transform:scaleX(0.9654);-webkit-text-stroke:0.25px #fff;">NB27-PC_Network</div>
<svg style="left:421.5px;top:601.8px" width="24" height="30" viewBox="0 0 24 30"><rect x="1.5" y="9.2" width="3.1" height="11.5" fill="#000"/><rect x="10.3" y="3.5" width="3.3" height="8.8" fill="#000"/><polygon points="0.3,20.3 13.2,10.4 22.2,15.8 8.7,28.5" fill="#000" stroke="#000" stroke-width="1" stroke-linejoin="round"/><rect x="3.7" y="15.6" width="15" height="7" rx="3.3" fill="#fff" transform="rotate(-42 11.2 19.1)"/><circle cx="8.3" cy="22.1" r="0.9" fill="#ff2020" opacity="1"/><circle cx="11.1" cy="19.2" r="0.9" fill="#2020ff" opacity="1"/><circle cx="14.4" cy="16" r="0.9" fill="#20e020" opacity="1"/></svg>
<div class="t" style="left:444.50px;top:610.36px;font-size:18px;color:#000;transform:scaleX(0.9481);-webkit-text-stroke:0.25px #fff;">6</div>
<div class="a" style="left:517.3px;top:603.4px;width:18.6px;height:33px;background:#000080;clip-path:polygon(5.6px 0,13px 0,18.6px 5.6px,18.6px 27.4px,13px 33px,5.6px 33px,0 27.4px,0 5.6px)"></div>
<div class="t" style="left:517.41px;top:608.72px;font-size:23px;color:#fff;transform:scale(1.3529,0.9043);-webkit-text-stroke:0.7px #fff;">b</div>
<div class="a" style="left:541.3px;top:603.4px;width:18.6px;height:33px;background:#00ff00;clip-path:polygon(5.6px 0,13px 0,18.6px 5.6px,18.6px 27.4px,13px 33px,5.6px 33px,0 27.4px,0 5.6px)"></div>
<div class="t" style="left:542.70px;top:604.45px;font-size:23px;color:#000;transform:scale(1.1872,1.0449);-webkit-text-stroke:0.5px #000;">g</div>
<div class="a" style="left:566.5px;top:603.4px;width:18.6px;height:33px;background:#800080;clip-path:polygon(5.6px 0,13px 0,18.6px 5.6px,18.6px 27.4px,13px 33px,5.6px 33px,0 27.4px,0 5.6px)"></div>
<div class="t" style="left:568.64px;top:609.38px;font-size:23px;color:#fff;transform:scale(1.1230,1.0256);-webkit-text-stroke:0.7px #fff;">n</div>
<svg style="left:592.2px;top:606.5px" width="18" height="30" viewBox="0 0 18 30"><path d="M4.1,10.8 L10.9,10.8 L10.9,23 L7.8,26.9 L6.2,26 L6.2,24.2 L4.8,23.6 L5.4,22 L4.6,21.2 L5.4,19.4 L4.6,18.6 L5.4,17 L4.6,16 L5.4,14.6 L4.1,13.6 Z" fill="#c4c4c4"/><rect x="7.6" y="13" width="1.9" height="10" fill="#f2f2f2"/><polygon points="3.8,0.1 12,0.1 15.1,3 15.1,10.6 0.5,10.6 0.5,3" fill="#000"/><polygon points="5.2,3 10.7,3 12.4,6 3.1,6" fill="#fff"/></svg>
<div class="t" style="left:641.83px;top:610.66px;font-size:18px;color:#000;transform:scaleX(0.8303);-webkit-text-stroke:0.25px #fff;">81%</div>
<div class="a" style="left:705.1px;top:612.5999999999999px;width:349.10999999999996px;height:16.6px;background:linear-gradient(to right,#ff0000 0,#ff8000 77px,#ffff00 142px,#ffff00 100%)"></div>
<div class="a" style="left:19.3px;top:642.6px;width:173.2px;height:42.2px;background:linear-gradient(to bottom,#fdfdfb 0%,#f4f3ee 25%,#e3e0d2 55%,#cbc7b6 85%,#b5b09f 100%)"></div>
<div class="a" style="left:199.2px;top:642.6px;width:174.6px;height:42.2px;background:linear-gradient(to bottom,#fdfdfb 0%,#f4f3ee 25%,#e3e0d2 55%,#cbc7b6 85%,#b5b09f 100%)"></div>
<div class="a" style="left:379.8px;top:642.6px;width:173.6px;height:42.2px;background:linear-gradient(to bottom,#fdfdfb 0%,#f4f3ee 25%,#e3e0d2 55%,#cbc7b6 85%,#b5b09f 100%)"></div>
<div class="t" style="left:77.56px;top:655.83px;font-size:16.5px;color:#000;transform:scaleX(0.9604);-webkit-text-stroke:0.22px #e2dfd1;">Rescan</div>
<div class="t" style="left:235.30px;top:655.83px;font-size:16.5px;color:#000;transform:scaleX(1.0113);-webkit-text-stroke:0.22px #e2dfd1;">Add to Profile</div>
<div class="t" style="left:433.92px;top:655.83px;font-size:16.5px;color:#000;transform:scaleX(1.0092);-webkit-text-stroke:0.22px #e2dfd1;">Connect</div>
<div class="a" style="left:193.4px;top:632.2px;width:178.3px;height:55.5px;border:3px solid #ff0000"></div>
<div class="a" style="left:4px;top:700px;width:973px;height:1px;background:#aca899"></div>
<div class="a" style="left:4px;top:701px;width:973px;height:1px;background:#fff"></div>
<div class="t" style="left:112.88px;top:718.83px;font-size:16.5px;color:#000;transform:scaleX(1.0057);-webkit-text-stroke:0.22px #ece9d8;">Status &gt;&gt;</div>
<div class="t" style="left:191.60px;top:718.83px;font-size:16.5px;color:#000;transform:scaleX(0.9594);-webkit-text-stroke:0.22px #ece9d8;">AP1 &lt;--&gt; 00-03-7F-00-D7-A4</div>
<div class="t" style="left:83.12px;top:750.28px;font-size:16.5px;color:#000;transform:scaleX(1.0673);-webkit-text-stroke:0.22px #ece9d8;">Extra Info &gt;&gt;</div>
<div class="t" style="left:190.32px;top:750.28px;font-size:16.5px;color:#000;transform:scaleX(0.9938);-webkit-text-stroke:0.22px #ece9d8;">Link is Up [TxPower:100%]</div>
<div class="t" style="left:102.16px;top:781.73px;font-size:16.5px;color:#000;transform:scaleX(0.9579);-webkit-text-stroke:0.22px #ece9d8;">Channel &gt;&gt;</div>
<div class="t" style="left:190.85px;top:781.73px;font-size:16.5px;color:#000;transform:scaleX(0.9707);-webkit-text-stroke:0.22px #ece9d8;">6 &lt;--&gt; 2437000 MHz</div>
<div class="t" style="left:49.20px;top:813.18px;font-size:16.5px;color:#000;transform:scaleX(1.0491);-webkit-text-stroke:0.22px #ece9d8;">Authentication &gt;&gt;</div>
<div class="t" style="left:190.57px;top:813.18px;font-size:16.5px;color:#000;-webkit-text-stroke:0.22px #ece9d8;">Unknown</div>
<div class="t" style="left:77.35px;top:844.63px;font-size:16.5px;color:#000;transform:scaleX(1.0469);-webkit-text-stroke:0.22px #ece9d8;">Encryption &gt;&gt;</div>
<div class="t" style="left:190.34px;top:844.63px;font-size:16.5px;color:#000;transform:scaleX(0.9790);-webkit-text-stroke:0.22px #ece9d8;">None</div>
<div class="t" style="left:54.97px;top:876.08px;font-size:16.5px;color:#000;transform:scaleX(1.0340);-webkit-text-stroke:0.22px #ece9d8;">Network Type &gt;&gt;</div>
<div class="t" style="left:190.12px;top:876.08px;font-size:16.5px;color:#000;transform:scaleX(1.1497);-webkit-text-stroke:0.22px #ece9d8;">Infrastructure</div>
<div class="t" style="left:83.16px;top:907.53px;font-size:16.5px;color:#000;transform:scaleX(0.9634);-webkit-text-stroke:0.22px #ece9d8;">IP Address &gt;&gt;</div>
<div class="t" style="left:192.25px;top:907.53px;font-size:16.5px;color:#000;transform:scaleX(1.0190);-webkit-text-stroke:0.22px #ece9d8;">192.168.5.60</div>
<div class="t" style="left:93.12px;top:938.98px;font-size:16.5px;color:#000;transform:scaleX(0.9335);-webkit-text-stroke:0.22px #ece9d8;">Sub Mask &gt;&gt;</div>
<div class="t" style="left:190.80px;top:938.98px;font-size:16.5px;color:#000;transform:scaleX(1.0390);-webkit-text-stroke:0.22px #ece9d8;">255.255.255.0</div>
<div class="t" style="left:34.78px;top:970.43px;font-size:16.5px;color:#000;transform:scaleX(1.0227);-webkit-text-stroke:0.22px #ece9d8;">Default Gateway &gt;&gt;</div>
<div class="t" style="left:192.25px;top:970.43px;font-size:16.5px;color:#000;transform:scaleX(1.0195);-webkit-text-stroke:0.22px #ece9d8;">192.168.5.254</div>
<div class="a" style="left:19px;top:1013.5px;width:232.8px;height:1px;background:#aca899"></div>
<div class="a" style="left:19px;top:1014.5px;width:232.8px;height:1px;background:#fff"></div>
<div class="a" style="left:289.2px;top:1013.5px;width:230.8px;height:1px;background:#aca899"></div>
<div class="a" style="left:289.2px;top:1014.5px;width:230.8px;height:1px;background:#fff"></div>
<div class="t" style="left:259.44px;top:1001.87px;font-size:16.5px;color:#000;transform:scale(0.9009,1.0688);-webkit-text-stroke:0.22px #ece9d8;">HT</div>
<div class="t" style="left:45.33px;top:1047.23px;font-size:16.5px;color:#000;transform:scaleX(1.0629);-webkit-text-stroke:0.22px #ece9d8;">BW &gt;&gt; n/a</div>
<div class="t" style="left:53.86px;top:1078.93px;font-size:16.5px;color:#000;transform:scaleX(1.0803);-webkit-text-stroke:0.22px #ece9d8;">GI &gt;&gt; n/a</div>
<div class="t" style="left:205.02px;top:1078.93px;font-size:16.5px;color:#000;transform:scaleX(0.9901);-webkit-text-stroke:0.22px #ece9d8;">MCS &gt;&gt; n/a</div>
<div class="t" style="left:364.50px;top:1047.53px;font-size:16.5px;color:#000;transform:scaleX(0.9728);-webkit-text-stroke:0.22px #ece9d8;">SNR0 &gt;&gt; n/a</div>
<div class="t" style="left:364.50px;top:1078.93px;font-size:16.5px;color:#000;transform:scaleX(0.9728);-webkit-text-stroke:0.22px #ece9d8;">SNR1 &gt;&gt; n/a</div>
<div class="a" style="left:680px;top:715.0px;width:297px;height:31px;background:#fff"></div>
<div class="a" style="left:680px;top:715.0px;width:297px;height:1px;background:#a09c8c"></div>
<div class="a" style="left:680px;top:715.0px;width:1px;height:28px;background:#a09c8c"></div>
<div class="a" style="left:681px;top:716.0px;width:296px;height:27px;background:linear-gradient(to right,#18f018 0px,#50e070 75px,#70d8a0 118px,#a8c8f0 184px,#70d8a0 250px,#50e070 293px,#18f018 368px)"></div>
<div class="t" style="left:826.69px;top:722.23px;font-size:16.5px;color:#fff;transform:scaleX(1.0125);">Link Quality &gt;&gt; 100%</div>
<div class="a" style="left:680px;top:746.55px;width:297px;height:31px;background:#fff"></div>
<div class="a" style="left:680px;top:746.55px;width:297px;height:1px;background:#a09c8c"></div>
<div class="a" style="left:680px;top:746.55px;width:1px;height:28px;background:#a09c8c"></div>
<div class="a" style="left:681px;top:747.55px;width:296px;height:27px;background:linear-gradient(to right,#18f018 0px,#50e070 75px,#70d8a0 118px,#a8c8f0 184px,#70d8a0 250px,#50e070 293px,#18f018 368px)"></div>
<div class="t" style="left:807.99px;top:753.78px;font-size:16.5px;color:#fff;transform:scaleX(0.9938);">Signal Strength 1 &gt;&gt; 100%</div>
<div class="a" style="left:680px;top:778.1px;width:297px;height:31px;background:#fff"></div>
<div class="a" style="left:680px;top:778.1px;width:297px;height:1px;background:#a09c8c"></div>
<div class="a" style="left:680px;top:778.1px;width:1px;height:28px;background:#a09c8c"></div>
<div class="a" style="left:681px;top:779.1px;width:296px;height:27px;background:linear-gradient(to right,#18f018 0px,#50e070 75px,#70d8a0 118px,#a8c8f0 184px,#70d8a0 250px,#50e070 293px,#18f018 368px)"></div>
<div class="t" style="left:807.99px;top:785.33px;font-size:16.5px;color:#fff;transform:scaleX(0.9938);">Signal Strength 2 &gt;&gt; 100%</div>
<div class="a" style="left:680px;top:809.65px;width:297px;height:31px;background:#fff"></div>
<div class="a" style="left:680px;top:809.65px;width:297px;height:1px;background:#a09c8c"></div>
<div class="a" style="left:680px;top:809.65px;width:1px;height:28px;background:#a09c8c"></div>
<div class="a" style="left:681px;top:810.65px;width:296px;height:27px;background:linear-gradient(to right,#18f018 0px,#50e070 75px,#70d8a0 118px,#a8c8f0 184px,#70d8a0 250px,#50e070 293px,#18f018 368px)"></div>
<div class="t" style="left:807.99px;top:816.88px;font-size:16.5px;color:#fff;transform:scaleX(0.9938);">Signal Strength 3 &gt;&gt; 100%</div>
<div class="a" style="left:680px;top:841.2px;width:297px;height:31px;background:#fff"></div>
<div class="a" style="left:680px;top:841.2px;width:297px;height:1px;background:#a09c8c"></div>
<div class="a" style="left:680px;top:841.2px;width:1px;height:28px;background:#a09c8c"></div>
<div class="a" style="left:681px;top:842.2px;width:296px;height:27px;background:#ece9d8"></div>
<div class="a" style="left:681px;top:842.2px;width:116px;height:27px;background:linear-gradient(to right,#18f018 0px,#50e070 75px,#70d8a0 118px,#a8c8f0 184px,#70d8a0 250px,#50e070 293px,#18f018 368px)"></div>
<div class="t" style="left:818.99px;top:848.43px;font-size:16.5px;color:#000;transform:scaleX(1.0129);-webkit-text-stroke:0.22px #ece9d8;">Noise Strength &gt;&gt; 26%</div>
<div class="t" style="left:679.74px;top:883.73px;font-size:16.5px;color:#000;transform:scaleX(1.0101);-webkit-text-stroke:0.22px #ece9d8;">Transmit</div>
<div class="a" style="left:755px;top:894.5px;width:222px;height:1px;background:#aca899"></div>
<div class="a" style="left:755px;top:895.5px;width:222px;height:1px;background:#fff"></div>
<div class="t" style="left:712.16px;top:914.23px;font-size:16.5px;color:#000;transform:scaleX(0.9596);-webkit-text-stroke:0.22px #ece9d8;">Link Speed &gt;&gt;</div>
<div class="t" style="left:822.51px;top:914.23px;font-size:16.5px;color:#000;transform:scaleX(0.9577);-webkit-text-stroke:0.22px #ece9d8;">54.0 Mbps</div>
<div class="t" style="left:704.74px;top:945.63px;font-size:16.5px;color:#000;transform:scaleX(1.0123);-webkit-text-stroke:0.22px #ece9d8;">Throughput &gt;&gt;</div>
<div class="t" style="left:821.40px;top:945.63px;font-size:16.5px;color:#000;transform:scaleX(0.9755);-webkit-text-stroke:0.22px #ece9d8;">0.000 Mbps</div>
<div class="a" style="left:964.6px;top:902.4px;width:12.4px;height:105px;background:#000"></div>
<div class="t" style="left:677.48px;top:1012.73px;font-size:16.5px;color:#000;transform:scaleX(1.0234);-webkit-text-stroke:0.22px #ece9d8;">Receive</div>
<div class="a" style="left:747px;top:1024.5px;width:230px;height:1px;background:#aca899"></div>
<div class="a" style="left:747px;top:1025.5px;width:230px;height:1px;background:#fff"></div>
<div class="t" style="left:712.16px;top:1042.63px;font-size:16.5px;color:#000;transform:scaleX(0.9596);-webkit-text-stroke:0.22px #ece9d8;">Link Speed &gt;&gt;</div>
<div class="t" style="left:821.65px;top:1042.63px;font-size:16.5px;color:#000;transform:scaleX(0.9689);-webkit-text-stroke:0.22px #ece9d8;">48.0 Mbps</div>
<div class="t" style="left:704.74px;top:1074.03px;font-size:16.5px;color:#000;transform:scaleX(1.0123);-webkit-text-stroke:0.22px #ece9d8;">Throughput &gt;&gt;</div>
<div class="t" style="left:821.40px;top:1074.03px;font-size:16.5px;color:#000;transform:scaleX(0.9755);-webkit-text-stroke:0.22px #ece9d8;">0.104 Mbps</div>
<div class="a" style="left:964.7px;top:1031.4px;width:12.3px;height:105.4px;background:#000"></div>
</body></html>
